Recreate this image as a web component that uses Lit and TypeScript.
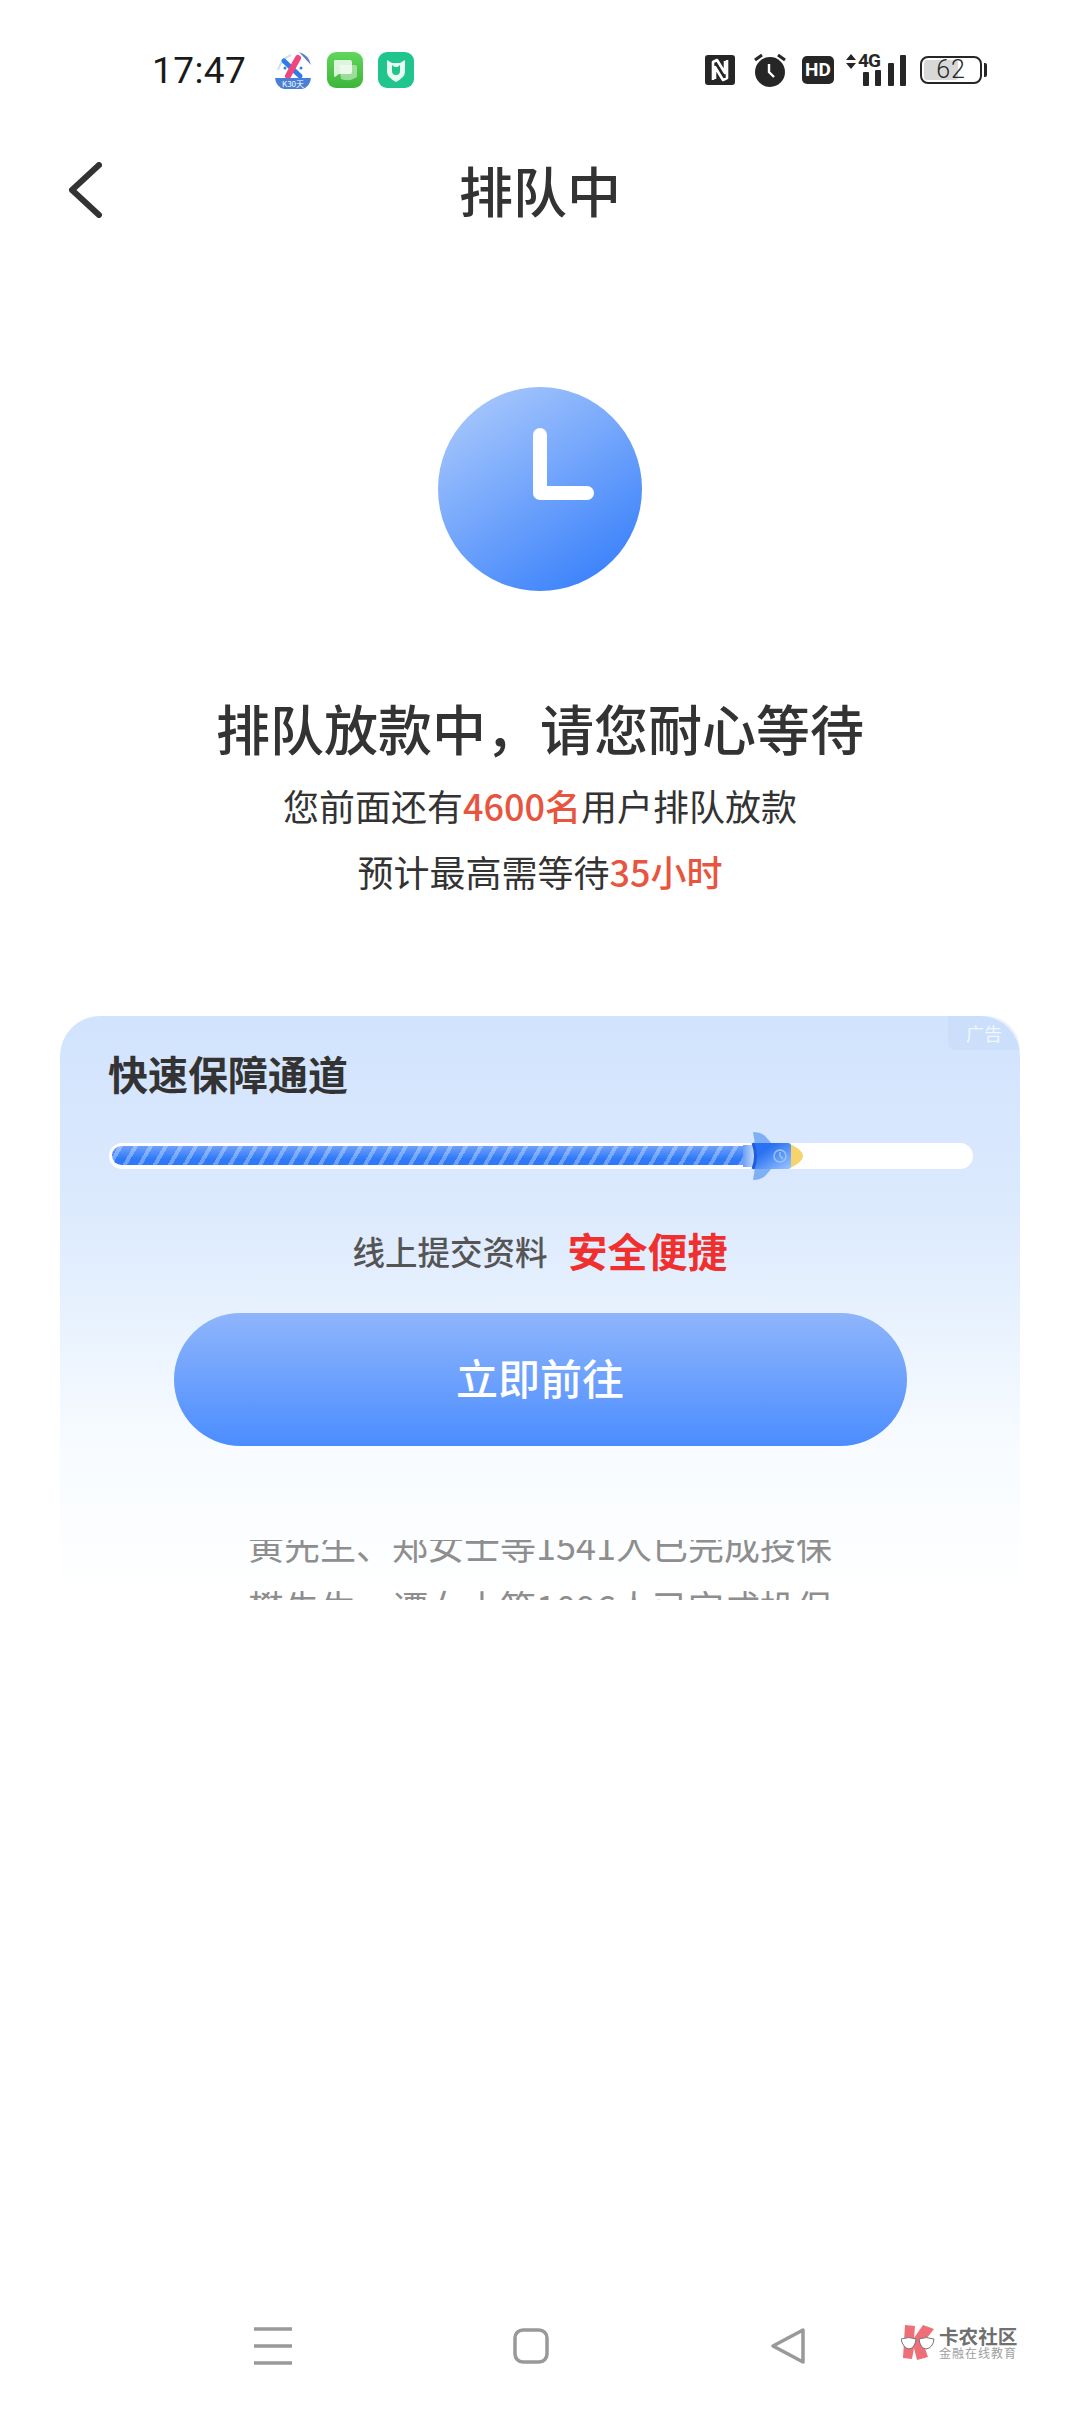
import { LitElement, html, css } from 'lit';
import { customElement } from 'lit/decorators.js';

const FONT = '"Noto Sans CJK SC", "Noto Sans", sans-serif';

@customElement('app-root')
export class AppRoot extends LitElement {
  static override styles = css`
    :host {
      display: flex;
      flex-direction: column;
      width: 1080px;
      height: 2412px;
      background: #fff;
      color: #333;
      font-family: "Noto Sans CJK SC", "Noto Sans", sans-serif;
      overflow: hidden;
    }
    svg { display: block; flex: none; }

    .status {
      display: flex;
      align-items: center;
      height: 140px;
      padding: 0 93px 0 152px;
      box-sizing: border-box;
    }
    .time {
      font-family: Roboto, sans-serif;
      font-size: 37px;
      color: #1a1a1a;
      width: 94px;
      letter-spacing: 0.4px;
    }
    .apps { display: flex; align-items: center; gap: 15px; margin-left: 29px; }
    .sys { display: flex; align-items: center; margin-left: auto; }
    .nfc { margin-right: 19px; }
    .alarm { margin-right: 16px; }
    .hd {
      width: 32px;
      height: 28px;
      margin-right: 12px;
      border-radius: 5px;
      background: #262626;
      color: #fff;
      font: 700 19px/28px Roboto, sans-serif;
      text-align: center;
    }
    .net { position: relative; width: 60px; height: 32px; margin-right: 14px; }
    .net-label {
      position: absolute;
      left: 12px;
      top: -3px;
      font: 700 19px/20px Roboto, sans-serif;
      letter-spacing: -1px;
      color: #262626;
    }
    .battery {
      position: relative;
      display: flex;
      align-items: center;
      justify-content: center;
      width: 62px;
      height: 28px;
      box-sizing: border-box;
      border: 2px solid #262626;
      border-radius: 8px;
      font: 300 25px/24px Roboto, sans-serif;
      letter-spacing: 1px;
      color: #262626;
    }
    .battery-fill {
      position: absolute;
      left: 2px;
      top: 2px;
      bottom: 2px;
      width: 34px;
      border-radius: 3px;
      background: #d8d8d8;
    }
    .battery span { position: relative; }
    .battery-cap { width: 3px; height: 14px; margin-left: 2px; background: #262626; border-radius: 0 2px 2px 0; }

    .header {
      display: grid;
      grid-template-columns: 1fr auto 1fr;
      align-items: center;
      height: 100px;
      padding-left: 68px;
      padding-right: 68px;
    }
    .title { font-size: 54px; font-weight: 500; line-height: 100px; color: #333; }

    main { display: flex; flex-direction: column; align-items: center; }
    .clock { margin-top: 147px; }
    h1 {
      margin: 107px 0 0;
      font-size: 54px;
      line-height: 60px;
      font-weight: 500;
      color: #333;
    }
    .sub { font-size: 36px; line-height: 66px; color: #333; }
    .sub:first-of-type { margin-top: 14px; }
    .sub b { font-weight: 500; color: #e8553f; }

    .card {
      position: relative;
      width: 960px;
      height: 587px;
      margin-top: 112px;
      padding: 35px 49px 0;
      box-sizing: border-box;
      border-radius: 40px 40px 0 0;
      background: linear-gradient(#d1e3fd 0%, #dbe9fd 30%, #e8f2fe 52%, #f7fbff 72%, #fff 100%);
    }
    .ad {
      position: absolute;
      top: 0;
      right: 0;
      width: 72px;
      height: 34px;
      border-radius: 0 40px 0 8px;
      background: rgba(190, 211, 247, 0.3);
      color: rgba(255, 255, 255, 0.75);
      font-size: 18px;
      line-height: 34px;
      text-align: center;
    }
    .card-title {
      font-size: 40px;
      line-height: 44px;
      font-weight: 600;
      color: #333;
      margin: 0 0 0 -1px;
    }
    .track {
      position: relative;
      width: 864px;
      height: 26px;
      margin-top: 48px;
      border-radius: 13px;
      background: #fff;
    }
    .fill {
      position: absolute;
      left: 3px;
      top: 3px;
      width: 641px;
      height: 19px;
      border-radius: 10px 0 0 10px;
      background:
        linear-gradient(rgba(255, 255, 255, 0.3), rgba(255, 255, 255, 0) 70%),
        repeating-linear-gradient(-60deg, #2f78f8 0 9px, #6ea3fb 9px 13px);
    }
    .rocket { position: absolute; left: 634px; top: -11px; }

    .promo {
      display: flex;
      justify-content: center;
      align-items: center;
      gap: 20px;
      height: 50px;
      margin-top: 56px;
    }
    .promo-text { font-size: 32.5px; font-weight: 500; color: #555; }
    .promo-hot { font-size: 40px; font-weight: 600; color: #f0302f; }
    .go {
      width: 733px;
      height: 133px;
      margin: 38px auto 0;
      border-radius: 67px;
      background: linear-gradient(#8fb5fb, #4b8dff);
      color: #fff;
      font-size: 42px;
      font-weight: 500;
      line-height: 127px;
      text-align: center;
    }
    .ticker { height: 60px; margin-top: 94px; overflow: hidden; }
    .ticker div {
      font-size: 36px;
      line-height: 58px;
      color: #8e8e8e;
      text-align: center;
      white-space: nowrap;
    }
    .ticker div:first-child { margin-top: -25px; }
    .ticker div + div { margin-top: 4px; }

    .nav {
      display: flex;
      align-items: center;
      margin-top: auto;
      padding: 0 0 47px 254px;
    }
    .nav-items { display: flex; align-items: center; gap: 221px; }
    .mark { display: flex; align-items: center; gap: 4px; margin-left: 95px; margin-top: -8px; }
    .mark-text { display: flex; flex-direction: column; }
    .mark-name { font-size: 19.6px; line-height: 21px; font-weight: 700; color: #707070; white-space: nowrap; }
    .mark-sub { font-size: 12px; line-height: 14px; letter-spacing: 1px; color: #a0a0a0; white-space: nowrap; }
  `;

  renderApps() {
    return html`<div class="apps">
      <svg width="37" height="38" viewBox="0 0 37 38">
        <path d="M24 1 Q34 4 36 14 Z" fill="#5b7fc9" />
        <path d="M3 19 Q6 8 16 4" fill="none" stroke="#cfe0f5" stroke-width="2" />
        <path d="M9 10 L25 25" stroke="#2f7be8" stroke-width="5" stroke-linecap="round" />
        <path d="M23 7 L13 25" stroke="#f0457d" stroke-width="6" stroke-linecap="round" />
        <circle cx="10" cy="17" r="1.5" fill="#2f7be8" />
        <circle cx="26" cy="17" r="1.5" fill="#2f7be8" />
        <path d="M0 27 H36 Q35 36 27 38 H9 Q1 36 0 27 Z" fill="#4a7fd6" />
        <text x="18" y="36" font-size="8" fill="#fff" text-anchor="middle" font-family=${FONT}>K30天</text>
      </svg>
      <svg width="36" height="36" viewBox="0 0 36 36">
        <defs>
          <linearGradient id="msg" x1="0" y1="0" x2="0" y2="1">
            <stop offset="0" stop-color="#62d65c" />
            <stop offset="1" stop-color="#3db53b" />
          </linearGradient>
        </defs>
        <rect width="36" height="36" rx="9" fill="url(#msg)" />
        <path d="M12 13 H28 Q30 13 30 15 V24 Q30 26 28 26 Q22 30 14 27 Z" fill="#fff" opacity=".45" />
        <path d="M8 8 H23 Q25 8 25 10 V20 Q25 22 23 22 H12 L8 25 Q7 25 7 24 V9 Q7 8 8 8 Z" fill="#fff" opacity=".8" />
      </svg>
      <svg width="36" height="36" viewBox="0 0 36 36">
        <rect width="36" height="36" rx="9" fill="#1fc58c" />
        <path d="M9 8 L14 11 H22 L27 8 V20 Q27 25 18 30 Q9 25 9 20 Z" fill="#e8fbf3" />
        <path d="M14 13 V19 Q14 23 18 23 Q22 23 22 19 V13 L19.5 15 H16.5 Z" fill="#1fc58c" />
      </svg>
    </div>`;
  }

  renderSys() {
    return html`<div class="sys">
      <svg class="nfc" width="30" height="30" viewBox="0 0 30 30">
        <rect width="30" height="30" rx="3" fill="#262626" />
        <path d="M8 25 V7 L12 5 L20 18 V6 M22 5 V23 L18 25 L10 12 V24" fill="none" stroke="#fff" stroke-width="2.6" stroke-linejoin="round" />
      </svg>
      <svg class="alarm" width="32" height="34" viewBox="0 0 32 34">
        <circle cx="16" cy="19" r="15" fill="#262626" />
        <path d="M1 7 L8 2 M31 7 L24 2" stroke="#262626" stroke-width="3" />
        <path d="M15 11 V19 L20 24" fill="none" stroke="#fff" stroke-width="2.4" />
      </svg>
      <div class="hd">HD</div>
      <div class="net">
        <svg width="60" height="32" viewBox="0 0 60 32">
          <path d="M0 6 L5 0 L10 6 Z M0 9 H10 L5 15 Z" fill="#262626" />
          <rect x="17" y="18" width="6" height="14" rx="1" fill="#262626" />
          <rect x="29" y="16" width="6" height="16" rx="1" fill="#262626" />
          <rect x="42" y="9" width="6" height="23" rx="1" fill="#262626" />
          <rect x="54" y="1" width="6" height="31" rx="1" fill="#262626" />
        </svg>
        <span class="net-label">4G</span>
      </div>
      <div class="battery">
        <div class="battery-fill"></div>
        <span>62</span>
      </div>
      <div class="battery-cap"></div>
    </div>`;
  }

  renderRocket() {
    return html`<svg class="rocket" width="60" height="48" viewBox="0 0 60 48">
      <defs>
        <linearGradient id="tail" x1="0" y1="0" x2="1" y2="0">
          <stop offset="0" stop-color="#6c9ff5" />
          <stop offset="1" stop-color="#c9ddfb" />
        </linearGradient>
        <linearGradient id="hull" x1="0" y1="0" x2="1" y2="1">
          <stop offset="0.3" stop-color="#2a72f2" />
          <stop offset="1" stop-color="#9cc6ff" />
        </linearGradient>
      </defs>
      <path d="M10 0 Q18 0 23 5 L29 12 H12 Z" fill="#7fb0f5" />
      <path d="M10 48 Q18 48 23 43 L29 36 H12 Z" fill="#7fb0f5" />
      <rect x="0" y="13" width="12" height="22" fill="url(#tail)" />
      <path d="M47 12 Q60 18 60 24 Q60 30 47 36 Z" fill="#f7d36b" />
      <path d="M10 11 H45 Q48 11 48 14 V34 Q48 37 45 37 H10 Q15 24 10 11 Z" fill="url(#hull)" />
      <path d="M10 11 Q15 24 10 37" fill="none" stroke="#1f5fd8" stroke-width="3" />
      <circle cx="37" cy="24" r="6" fill="none" stroke="#9cc2f7" stroke-width="1.5" />
      <path d="M37 20 V24 L40 27" fill="none" stroke="#9cc2f7" stroke-width="1.5" />
    </svg>`;
  }

  renderMark() {
    return html`<div class="mark">
      <svg width="34" height="36" viewBox="0 0 34 36">
        <path d="M4 1 L14 2 L13 14 L22 1 L33 5 L22 19 L27 33 L16 36 L13 24 L11 35 L2 34 Z" fill="#ee6f77" />
        <path d="M0 15 Q8 12 15 15 Q14 24 8 25 Q2 24 0 15 Z M18 15 Q25 12 33 15 Q32 24 25 25 Q19 24 18 15 Z" fill="#fff" stroke="#777" stroke-width="1" />
      </svg>
      <div class="mark-text">
        <span class="mark-name">卡农社区</span>
        <span class="mark-sub">金融在线教育</span>
      </div>
    </div>`;
  }

  override render() {
    return html`
      <div class="status">
        <span class="time">17:47</span>
        ${this.renderApps()}
        ${this.renderSys()}
      </div>
      <div class="header">
        <svg width="34" height="56" viewBox="0 0 34 56">
          <path d="M31 3 L4 28 L31 53" fill="none" stroke="#333" stroke-width="6" stroke-linecap="round" stroke-linejoin="round" />
        </svg>
        <span class="title">排队中</span>
      </div>
      <main>
        <svg class="clock" width="204" height="204" viewBox="0 0 204 204">
          <defs>
            <linearGradient id="face" x1="0.2" y1="0.05" x2="0.8" y2="0.95">
              <stop offset="0" stop-color="#a4c5fc" />
              <stop offset="1" stop-color="#3b82fb" />
            </linearGradient>
          </defs>
          <circle cx="102" cy="102" r="102" fill="url(#face)" />
          <path d="M102 48 V106 H149" fill="none" stroke="#fff" stroke-width="14" stroke-linecap="round" stroke-linejoin="round" />
        </svg>
        <h1>排队放款中，请您耐心等待</h1>
        <div class="sub">您前面还有<b>4600名</b>用户排队放款</div>
        <div class="sub">预计最高需等待<b>35小时</b></div>
        <section class="card">
          <div class="ad">广告</div>
          <div class="card-title">快速保障通道</div>
          <div class="track">
            <div class="fill"></div>
            ${this.renderRocket()}
          </div>
          <div class="promo">
            <span class="promo-text">线上提交资料</span>
            <span class="promo-hot">安全便捷</span>
          </div>
          <div class="go">立即前往</div>
          <div class="ticker">
            <div>黄先生、郑女士等1541人已完成投保</div>
            <div>樊先生、谭女士等1096人已完成投保</div>
          </div>
        </section>
      </main>
      <div class="nav">
        <div class="nav-items">
          <svg width="38" height="38" viewBox="0 0 38 38">
            <path d="M0 2 H38 M0 19 H38 M0 36 H38" stroke="#999" stroke-width="3.5" />
          </svg>
          <svg width="36" height="36" viewBox="0 0 36 36">
            <rect x="2" y="2" width="32" height="32" rx="8" fill="none" stroke="#999" stroke-width="3.5" />
          </svg>
          <svg width="36" height="38" viewBox="0 0 36 38">
            <path d="M33 3 V35 L3 19 Z" fill="none" stroke="#999" stroke-width="3.5" stroke-linejoin="round" />
          </svg>
        </div>
        ${this.renderMark()}
      </div>
    `;
  }
}
